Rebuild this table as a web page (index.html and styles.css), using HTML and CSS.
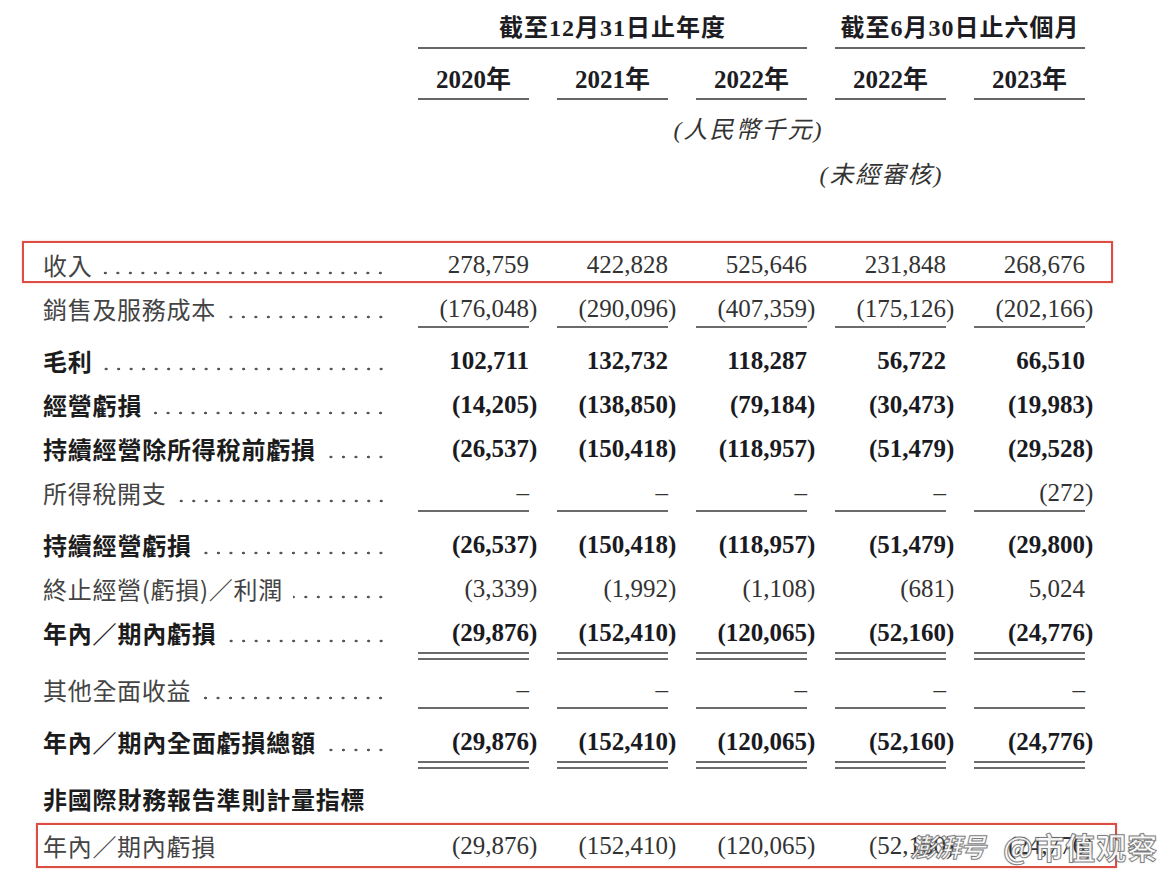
FILE: index.html
```html
<!DOCTYPE html>
<html lang="zh-Hant">
<head>
<meta charset="utf-8">
<title>財務摘要</title>
<link rel="stylesheet" href="styles.css">
</head>
<body>
<div class="page">
  <header class="head">
    <div class="row period-row">
      <div class="period yearend">截至12月31日止年度</div>
      <div class="period halfyear">截至6月30日止六個月</div>
    </div>
    <div class="row year-row">
      <div></div>
      <div class="year">2020年</div>
      <div class="year">2021年</div>
      <div class="year">2022年</div>
      <div class="year">2022年</div>
      <div class="year">2023年</div>
    </div>
    <div class="row unit-row">
      <div class="unit currency">(人民幣千元)</div>
    </div>
    <div class="row unit-row">
      <div class="unit unaudited">(未經審核)</div>
    </div>
  </header>

  <section class="lines">
    <div class="row boxed first-box">
      <div class="label"><span class="t">收入</span><span class="dots"></span></div>
      <div class="num">278,759</div>
      <div class="num">422,828</div>
      <div class="num">525,646</div>
      <div class="num">231,848</div>
      <div class="num">268,676</div>
    </div>

    <div class="row ruled">
      <div class="label"><span class="t">銷售及服務成本</span><span class="dots"></span></div>
      <div class="num">(176,048<span class="cp">)</span></div>
      <div class="num">(290,096<span class="cp">)</span></div>
      <div class="num">(407,359<span class="cp">)</span></div>
      <div class="num">(175,126<span class="cp">)</span></div>
      <div class="num">(202,166<span class="cp">)</span></div>
    </div>

    <div class="row strong">
      <div class="label"><span class="t">毛利</span><span class="dots"></span></div>
      <div class="num">102,711</div>
      <div class="num">132,732</div>
      <div class="num">118,287</div>
      <div class="num">56,722</div>
      <div class="num">66,510</div>
    </div>

    <div class="row strong">
      <div class="label"><span class="t">經營虧損</span><span class="dots"></span></div>
      <div class="num">(14,205<span class="cp">)</span></div>
      <div class="num">(138,850<span class="cp">)</span></div>
      <div class="num">(79,184<span class="cp">)</span></div>
      <div class="num">(30,473<span class="cp">)</span></div>
      <div class="num">(19,983<span class="cp">)</span></div>
    </div>

    <div class="row strong">
      <div class="label"><span class="t">持續經營除所得稅前虧損</span><span class="dots"></span></div>
      <div class="num">(26,537<span class="cp">)</span></div>
      <div class="num">(150,418<span class="cp">)</span></div>
      <div class="num">(118,957<span class="cp">)</span></div>
      <div class="num">(51,479<span class="cp">)</span></div>
      <div class="num">(29,528<span class="cp">)</span></div>
    </div>

    <div class="row ruled">
      <div class="label"><span class="t">所得稅開支</span><span class="dots"></span></div>
      <div class="num">–</div>
      <div class="num">–</div>
      <div class="num">–</div>
      <div class="num">–</div>
      <div class="num">(272<span class="cp">)</span></div>
    </div>

    <div class="row strong">
      <div class="label"><span class="t">持續經營虧損</span><span class="dots"></span></div>
      <div class="num">(26,537<span class="cp">)</span></div>
      <div class="num">(150,418<span class="cp">)</span></div>
      <div class="num">(118,957<span class="cp">)</span></div>
      <div class="num">(51,479<span class="cp">)</span></div>
      <div class="num">(29,800<span class="cp">)</span></div>
    </div>

    <div class="row">
      <div class="label"><span class="t">終止經營(虧損)／利潤</span><span class="dots"></span></div>
      <div class="num">(3,339<span class="cp">)</span></div>
      <div class="num">(1,992<span class="cp">)</span></div>
      <div class="num">(1,108<span class="cp">)</span></div>
      <div class="num">(681<span class="cp">)</span></div>
      <div class="num">5,024</div>
    </div>

    <div class="row strong doubled">
      <div class="label"><span class="t">年內／期內虧損</span><span class="dots"></span></div>
      <div class="num">(29,876<span class="cp">)</span></div>
      <div class="num">(152,410<span class="cp">)</span></div>
      <div class="num">(120,065<span class="cp">)</span></div>
      <div class="num">(52,160<span class="cp">)</span></div>
      <div class="num">(24,776<span class="cp">)</span></div>
    </div>

    <div class="row ruled">
      <div class="label"><span class="t">其他全面收益</span><span class="dots"></span></div>
      <div class="num">–</div>
      <div class="num">–</div>
      <div class="num">–</div>
      <div class="num">–</div>
      <div class="num">–</div>
    </div>

    <div class="row strong doubled">
      <div class="label"><span class="t">年內／期內全面虧損總額</span><span class="dots"></span></div>
      <div class="num">(29,876<span class="cp">)</span></div>
      <div class="num">(152,410<span class="cp">)</span></div>
      <div class="num">(120,065<span class="cp">)</span></div>
      <div class="num">(52,160<span class="cp">)</span></div>
      <div class="num">(24,776<span class="cp">)</span></div>
    </div>

    <div class="row strong">
      <div class="label"><span class="t">非國際財務報告準則計量指標</span></div>
    </div>

    <div class="row boxed last-box">
      <div class="label"><span class="t">年內／期內虧損</span></div>
      <div class="num">(29,876<span class="cp">)</span></div>
      <div class="num">(152,410<span class="cp">)</span></div>
      <div class="num">(120,065<span class="cp">)</span></div>
      <div class="num">(52,160<span class="cp">)</span></div>
      <div class="num">(24,776<span class="cp">)</span></div>
    </div>
  </section>

  <div class="watermark">
    <span class="wm-logo">澎湃号</span>
    <span class="wm-name">@市值观察</span>
  </div>
</div>
</body>
</html>
```

FILE: styles.css
```css
* { box-sizing: border-box; }

html, body {
  margin: 0;
  padding: 0;
  background: #ffffff;
}

body {
  width: 1168px;
  height: 876px;
  overflow: hidden;
  font-family: "Liberation Serif", "Noto Sans CJK TC", serif;
  color: #333;
}

.page {
  position: relative;
  width: 1168px;
  height: 876px;
  padding-left: 43px;
}

.row {
  display: grid;
  grid-template-columns: 347px repeat(5, 111px);
  column-gap: 28px;
  width: 1042px;
}

/* ---------- header ---------- */
.head {
  display: flex;
  flex-direction: column;
  gap: 13px;
  padding-top: 10px;
}

.period, .year {
  font-family: "Liberation Serif", "Noto Sans CJK TC", serif;
  font-weight: bold;
  font-size: 24px;
  line-height: 36px;
  height: 38px;
  text-align: center;
  color: #1c1c22;
  white-space: nowrap;
  border-bottom: 2px solid #666;
  overflow: visible;
}

.period {
  letter-spacing: 1px;
  height: 39px;
  padding-bottom: 1px;
}

.yearend { grid-column: 2 / 5; }
.halfyear { grid-column: 5 / 7; }

.year {
  font-size: 25px;
}

.unit-row { margin-top: 2px; }

.unit {
  font-family: "Liberation Serif", "Noto Sans CJK TC", serif;
  font-style: italic;
  font-size: 24px;
  line-height: 30px;
  height: 30px;
  letter-spacing: 2px;
  color: #333;
  white-space: nowrap;
  justify-self: center;
}

.currency { grid-column: 4; margin-right: 6px; }
.unaudited { grid-column: 5; margin-right: 18px; }

/* ---------- lines ---------- */
.lines {
  display: flex;
  flex-direction: column;
  gap: 14px;
  margin-top: 51px;
}

.label {
  display: flex;
  align-items: center;
  height: 30px;
  font-family: "Noto Sans CJK TC", sans-serif;
  font-size: 24px;
  line-height: 30px;
  color: #444;
  min-width: 0;
}

.label .t {
  white-space: nowrap;
  letter-spacing: 0.7px;
}

.dots {
  flex: 1;
  align-self: stretch;
  margin-left: 10px;
  background-image: radial-gradient(circle at center, #555 0, #555 1.1px, rgba(85, 85, 85, 0) 1.7px);
  background-size: 12.5px 4px;
  background-repeat: repeat-x;
  background-position: right 3px top 21px;
}

.num {
  font-family: "Liberation Serif", serif;
  font-size: 25px;
  line-height: 30px;
  height: 30px;
  text-align: right;
  white-space: nowrap;
  color: #333;
}

.cp {
  margin-right: -0.333em;
}

.strong .label {
  font-weight: bold;
  color: #1c1c1c;
}

.strong .num {
  font-weight: bold;
  color: #1a1a22;
}

.strong .label .t { letter-spacing: 0.8px; }

.ruled { margin-bottom: 4px; }
.ruled .num {
  height: 34px;
  padding-bottom: 2px;
  border-bottom: 2px solid #6b6b6b;
}

.doubled { margin-bottom: 1px; }
.doubled .num {
  height: 42px;
  padding-bottom: 12px;
  background:
    linear-gradient(#6b6b6b, #6b6b6b) left bottom / 100% 2px no-repeat,
    linear-gradient(#6b6b6b, #6b6b6b) left calc(100% - 6px) / 100% 2px no-repeat;
}

.boxed {
  border: 2px solid #dc4d43;
  box-shadow: 0 0 2px rgba(220, 77, 67, 0.35);
}

.first-box {
  margin-left: -21px;
  width: 1091px;
  padding: 7px 0 1px 19px;
  margin-bottom: -3px;
}

.last-box {
  margin-left: -7px;
  width: 1081px;
  padding: 6px 0 5px 5px;
  margin-top: -5px;
}

/* ---------- watermark ---------- */
.watermark {
  position: absolute;
  left: 910px;
  top: 826px;
  display: flex;
  align-items: center;
  gap: 18px;
  white-space: nowrap;
  pointer-events: none;
}

.wm-logo, .wm-name {
  font-family: "Noto Sans CJK SC", sans-serif;
  font-weight: bold;
  line-height: 40px;
  color: rgba(255, 255, 255, 0.92);
  -webkit-text-stroke: 1px rgba(90, 90, 90, 0.75);
  text-shadow: 0 0 2px rgba(0, 0, 0, 0.25);
}

.wm-logo {
  font-size: 26px;
  font-style: italic;
  letter-spacing: -1px;
}

.wm-name {
  font-size: 30px;
  letter-spacing: 1px;
}
```
